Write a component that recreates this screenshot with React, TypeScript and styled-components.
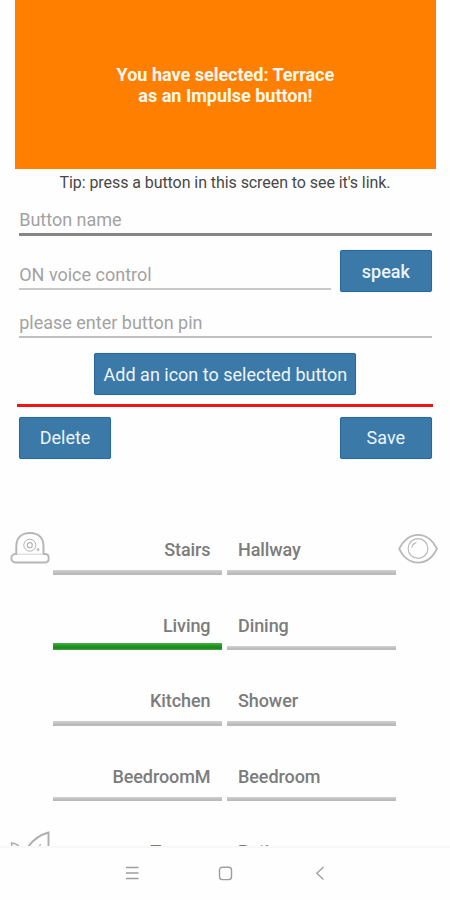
import React from "react";
import styled, { createGlobalStyle } from "styled-components";

const GlobalStyle = createGlobalStyle`
  * { box-sizing: border-box; }
  body { margin: 0; background: #fefefe; font-family: Roboto, sans-serif; }
`;

const Screen = styled.main`
  width: 450px;
  height: 900px;
  display: flex;
  flex-direction: column;
  overflow: hidden;
  background: #fefefe;
`;

const Content = styled.div`
  height: 846px;
  flex: none;
  overflow: hidden;
`;

const Banner = styled.header`
  height: 168.5px;
  margin: 0 13.7px 0 14.5px;
  padding-top: 63.8px;
  background: #ff8000;
  color: #fff8ee;
  font-size: 18px;
  font-weight: 700;
  line-height: 21.3px;
  text-align: center;
`;

const Tip = styled.p`
  height: 30.5px;
  margin: 0;
  padding-top: 4.6px;
  color: #484848;
  font-size: 16px;
  letter-spacing: -0.07px;
  line-height: 20px;
  text-align: center;
`;

const Form = styled.form`
  display: flex;
  flex-direction: column;
  padding: 0 18.3px 0 19.2px;
`;

const FieldRow = styled.div<{ $height: number }>`
  display: flex;
  justify-content: space-between;
  align-items: flex-end;
  height: ${(p) => p.$height}px;
`;

const Field = styled.div<{ $width?: number; $line: string; $thick: number; $gap: number; $lift?: number }>`
  width: ${(p) => (p.$width ? `${p.$width}px` : "100%")};
  margin-bottom: ${(p) => p.$lift ?? 0}px;
  padding-bottom: ${(p) => p.$gap}px;
  border-bottom: ${(p) => p.$thick}px solid ${(p) => p.$line};
  color: #a2a2a2;
  font-size: 18px;
  line-height: 20px;
`;

const Button = styled.button<{ $width?: number; $weight?: number }>`
  width: ${(p) => p.$width ?? 91.7}px;
  height: 42px;
  padding: 0;
  border: 1px solid #26699a;
  border-radius: 2px;
  background: #3b79a8;
  box-shadow: 0 0 1px #8fb3ce;
  color: #edf5fb;
  font-family: inherit;
  font-size: 18px;
  font-weight: ${(p) => p.$weight ?? 400};
  white-space: nowrap;
`;

const Centered = styled.div`
  display: flex;
  justify-content: center;
  padding-top: 15px;
  height: 66px;
`;

const Divider = styled.hr`
  width: 416px;
  height: 3px;
  margin: 0 0 9.5px -2px;
  border: 0;
  background: #ee1717;
`;

const Actions = styled.div`
  display: flex;
  justify-content: space-between;
`;

const Rooms = styled.section`
  margin-top: 41px;
`;

const RoomRow = styled.div`
  display: grid;
  grid-template-columns: 53px 169px 169px 54px;
  height: 75.4px;
  & > :nth-child(3) { margin-left: 5px; margin-right: -5px; }
`;

const Room = styled.div<{ $right?: boolean }>`
  display: flex;
  flex-direction: column;
  justify-content: flex-end;
  text-align: ${(p) => (p.$right ? "right" : "left")};
  color: #7c7c7c;
  font-size: 18px;
  font-weight: 500;
  line-height: 20px;
  letter-spacing: -0.08px;
`;

const RoomName = styled.span<{ $active?: boolean }>`
  padding: 0 11.5px ${(p) => (p.$active ? 7.5 : 10)}px 11px;
`;

const RoomBar = styled.div<{ $active?: boolean }>`
  height: ${(p) => (p.$active ? 7 : 4.5)}px;
  background: ${(p) =>
    p.$active
      ? "linear-gradient(#4fae4f 0, #219621 40%, #168a16 75%, #50a850)"
      : "linear-gradient(#d2d2d2, #bdbdbd 60%, #b8b8b8)"};
`;

const IconCell = styled.div<{ $pad: number; $top: number }>`
  padding-left: ${(p) => p.$pad}px;
  padding-top: ${(p) => p.$top}px;
  svg { display: block; }
`;

const NavBar = styled.nav`
  display: flex;
  flex: 1;
  border-top: 2px solid #f8f8f8;
  align-items: flex-start;
  padding: 16px 0 0 122px;
  gap: 74.5px;
`;

const SirenIcon = () => (
  <svg width="40" height="34" viewBox="0 0 40 34" fill="none" stroke="#b6b6b6">
    <path d="M6.300 22.500V15.500C6.300 7 11.500 2 20 2s13.500 5 13.500 13.500v7" strokeWidth="2" />
    <path d="M5.500 23h29.500c5 0 5 8.500 0 8.500H5.500c-5.500 0-5.500-8.500 0-8.500z" strokeWidth="1.900" />
    <path d="M7.300 22.600h25.200" stroke="#fefefe" strokeWidth="2.200" />
    <path d="M7.300 23h25.200" stroke="#d8d8d8" strokeWidth=".8" />
    <circle cx="19.800" cy="14.200" r="6" strokeWidth="1" />
    <circle cx="19.800" cy="14.200" r="2.500" strokeWidth="1.200" />
    <circle cx="28" cy="18.700" r="1.200" fill="#bcbcbc" stroke="#c9c9c9" strokeWidth=".8" />
  </svg>
);

const EyeIcon = () => (
  <svg width="40" height="32" viewBox="0 0 40 32" fill="none" stroke="#b8b8b8">
    <path d="M1.200 15.600C5 7.500 12 1.900 20 1.900S35 7.500 39 15.600C35 24 28 29.600 20 29.600S5 24 1.200 15.600z" strokeWidth="1.900" />
    <circle cx="20" cy="15.500" r="9.900" strokeWidth="1.100" />
    <path d="M13.800 14.500c.5-2.500 2.200-4.300 4.600-4.900" strokeWidth="1.200" />
  </svg>
);

const LeafIcon = () => (
  <svg width="40" height="36" viewBox="0 0 40 36" fill="none" stroke="#aeaeae">
    <path d="M2.500 17.500L1.500 12C5 12 8 14 11 17" strokeWidth="1.500" />
    <path d="M17 17.500C22 9.500 28 4.500 38.500 1.500V24C35 31 27 33 19 31C14 27 14 22 17 17.500z" strokeWidth="1.900" />
    <path d="M30.500 13l-2 5" strokeWidth="1.200" />
  </svg>
);

const MenuIcon = () => (
  <svg width="19" height="19" viewBox="0 0 19 19" fill="none" stroke="#9e9e9e" strokeWidth="1.300">
    <path d="M4 3.500h12.500M4 9h12.500M4 14.500h12.500" />
  </svg>
);

const HomeIcon = () => (
  <svg width="19" height="19" viewBox="0 0 19 19" fill="none" stroke="#9e9e9e" strokeWidth="1.400">
    <rect x="3.500" y="3.200" width="12" height="12.400" rx="2.800" />
  </svg>
);

const BackIcon = () => (
  <svg width="19" height="19" viewBox="0 0 19 19" fill="none" stroke="#9e9e9e" strokeWidth="1.300">
    <path d="M14.500 3L7.800 9.200l6.700 6.300" />
  </svg>
);

type RoomData = {
  left: string;
  right: string;
  active?: boolean;
  leftIcon?: React.ReactNode;
  rightIcon?: React.ReactNode;
};

const rooms: RoomData[] = [
  { left: "Stairs", right: "Hallway", leftIcon: <SirenIcon />, rightIcon: <EyeIcon /> },
  { left: "Living", right: "Dining", active: true },
  { left: "Kitchen", right: "Shower" },
  { left: "BeedroomM", right: "Beedroom" },
  { left: "Terrace", right: "Patio", leftIcon: <LeafIcon /> },
];

export default function App() {
  return (
    <Screen>
      <GlobalStyle />
      <Content>
        <Banner>
          <div>You have selected: Terrace</div>
          <div>as an Impulse button!</div>
        </Banner>
        <Tip>Tip: press a button in this screen to see it's link.</Tip>
        <Form onSubmit={(e) => e.preventDefault()}>
          <FieldRow $height={37}>
            <Field $line="#858585" $thick={3} $gap={3}>Button name</Field>
          </FieldRow>
          <FieldRow $height={56}>
            <Field $width={311.5} $line="#c9c9c9" $thick={2} $gap={3.5} $lift={2}>ON voice control</Field>
            <Button type="button" $weight={500}>speak</Button>
          </FieldRow>
          <FieldRow $height={46}>
            <Field $line="#c0c0c0" $thick={2} $gap={3.5}>please enter button pin</Field>
          </FieldRow>
          <Centered>
            <Button type="button" $width={262}>Add an icon to selected button</Button>
          </Centered>
          <Divider />
          <Actions>
            <Button type="button">Delete</Button>
            <Button type="submit">Save</Button>
          </Actions>
        </Form>
        <Rooms>
          {rooms.map((r) => (
            <RoomRow key={r.left}>
              <IconCell $pad={10} $top={r.left === "Terrace" ? 29.5 : 31.5}>{r.leftIcon}</IconCell>
              <Room $right>
                <RoomName $active={r.active}>{r.left}</RoomName>
                <RoomBar $active={r.active} />
              </Room>
              <Room>
                <RoomName>{r.right}</RoomName>
                <RoomBar />
              </Room>
              <IconCell $pad={6.7} $top={33}>{r.rightIcon}</IconCell>
            </RoomRow>
          ))}
        </Rooms>
      </Content>
      <NavBar>
        <MenuIcon />
        <HomeIcon />
        <BackIcon />
      </NavBar>
    </Screen>
  );
}
